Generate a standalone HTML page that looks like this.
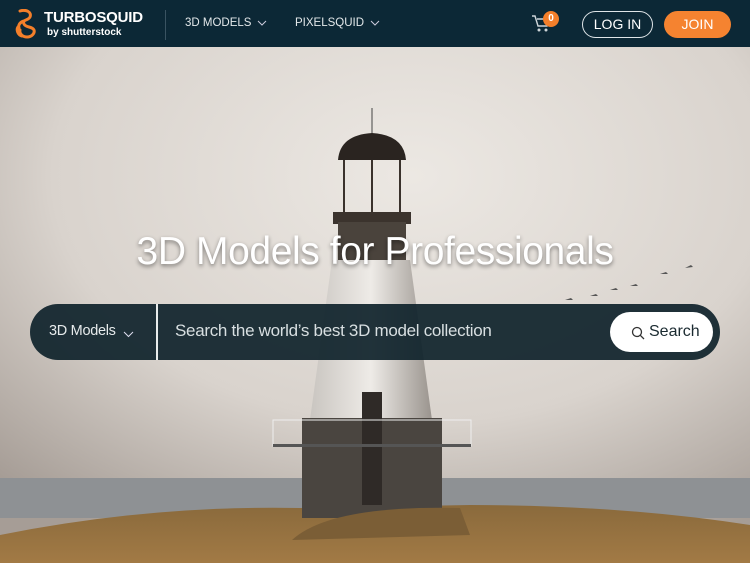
<!DOCTYPE html>
<html><head><meta charset="utf-8"><style>
*{margin:0;padding:0;box-sizing:border-box}
html,body{width:750px;height:563px;overflow:hidden}
body{font-family:"Liberation Sans",sans-serif;position:relative;background:#d9d3cc}
.hdr{position:absolute;left:0;top:0;width:750px;height:47px;background:#0c2836;color:#fff}
.hero{position:absolute;left:0;top:47px;width:750px;height:516px;overflow:hidden}
h1{position:absolute;top:230px;left:0;width:750px;text-align:center;color:#fff;font-weight:400;font-size:39px;text-shadow:0 2px 4px rgba(0,0,0,.45);letter-spacing:-0.4px}
.sb{position:absolute;left:30px;top:304px;width:690px;height:56px;border-radius:28px;background:rgba(16,36,44,.93);color:#e6eaeb}
</style></head><body>
<div class="hero"><svg width="750" height="516" viewBox="0 47 750 516">
<defs>
<radialGradient id="sky" cx="0.55" cy="0.25" r="0.8"><stop offset="0" stop-color="#ece8e3"/><stop offset="0.6" stop-color="#d9d3cd"/><stop offset="1" stop-color="#a69d96"/></radialGradient>
<linearGradient id="lh" x1="0" x2="1"><stop offset="0" stop-color="#c9c5c0"/><stop offset="0.5" stop-color="#eeebe7"/><stop offset="1" stop-color="#9a948e"/></linearGradient>
<linearGradient id="grass" x1="0" y1="0" x2="0" y2="1"><stop offset="0" stop-color="#8a6a3c"/><stop offset="1" stop-color="#a27a45"/></linearGradient>
</defs>
<rect x="0" y="47" width="750" height="516" fill="url(#sky)"/>
<rect x="0" y="478" width="750" height="40" fill="#8e9194"/>
<path d="M0 535 Q150 505 300 508 L470 505 Q620 505 750 525 L750 563 L0 563Z" fill="url(#grass)"/>
<line x1="372" y1="108" x2="372" y2="140" stroke="#444" stroke-width="1"/>
<path d="M338 160 Q340 135 372 133 Q404 135 406 160Z" fill="#2a2420"/>
<g stroke="#3a322c" stroke-width="2"><line x1="344" y1="160" x2="344" y2="212"/><line x1="372" y1="160" x2="372" y2="212"/><line x1="400" y1="160" x2="400" y2="212"/></g>
<rect x="333" y="212" width="78" height="12" fill="#3b332d"/>
<rect x="338" y="222" width="68" height="38" fill="#4a433c"/>
<path d="M332 260 L410 260 L432 420 L310 420Z" fill="url(#lh)"/>
<rect x="302" y="418" width="140" height="100" fill="#4a4540"/>
<rect x="362" y="392" width="20" height="113" fill="#2f2a27"/>
<g stroke="#eee" stroke-width="1" fill="none"><rect x="273" y="420" width="198" height="26"/></g>
<rect x="273" y="444" width="198" height="3" fill="#555"/>
<path d="M292 540 Q330 505 460 508 L470 535Z" fill="#7b5e36"/>
<g fill="#555"><path d="M565 300l6-2 2 2zM590 296l6-2 2 2zM610 290l6-2 2 2zM630 286l6-2 2 2zM660 274l6-2 2 2zM685 268l6-3 2 2z"/></g>
</svg></div>
<div class="hdr">
<svg style="position:absolute;left:14px;top:9px" width="26" height="30" viewBox="0 0 26 30"><path d="M6 2c6-2 12 1 10 6-2 4-8 2-6 7 2 4 8 2 10 6 1 3-2 7-7 7-4 0-8-3-7-7M4 18c-2 3 0 8 4 9M10 12c-4 1-6 4-5 7" stroke="#f47f2a" stroke-width="3" fill="none" stroke-linecap="round"/></svg>
<div style="position:absolute;left:44px;top:9px;font-size:15px;font-weight:700;letter-spacing:-0.2px">TURBOSQUID</div>
<div style="position:absolute;left:47px;top:27px;font-size:10px;font-weight:700">by shutterstock</div>
<div style="position:absolute;left:165px;top:10px;width:1px;height:30px;background:#3a5361"></div>
<div style="position:absolute;left:185px;top:17px;font-size:11.5px;color:#e3e8ea">3D MODELS</div>
<svg style="position:absolute;left:257px;top:20px" width="10" height="6"><path d="M1 1l4 4 4-4" stroke="#ccd" fill="none"/></svg>
<div style="position:absolute;left:295px;top:17px;font-size:11.5px;color:#e3e8ea">PIXELSQUID</div>
<svg style="position:absolute;left:370px;top:20px" width="10" height="6"><path d="M1 1l4 4 4-4" stroke="#ccd" fill="none"/></svg>
<svg style="position:absolute;left:531px;top:14px" width="20" height="20" viewBox="0 0 20 20"><path d="M1 2h3l3 10h9l2-7H6" stroke="#cfd6da" stroke-width="1.4" fill="none"/><circle cx="8" cy="16" r="1.5" fill="#cfd6da"/><circle cx="15" cy="16" r="1.5" fill="#cfd6da"/></svg>
<div style="position:absolute;left:543px;top:11px;width:16px;height:16px;border-radius:8px;background:#f47f2a;font-size:10px;text-align:center;line-height:16px;font-weight:700">0</div>
<div style="position:absolute;left:582px;top:11px;width:71px;height:27px;border:1.5px solid #dfe5e8;border-radius:14px;text-align:center;line-height:24px;font-size:14px">LOG IN</div>
<div style="position:absolute;left:664px;top:11px;width:67px;height:27px;background:#f58330;border-radius:14px;text-align:center;line-height:27px;font-size:14px">JOIN</div>
</div>
<h1>3D Models for Professionals</h1>
<div class="sb">
<div style="position:absolute;left:19px;top:19px;font-size:14.5px;letter-spacing:-0.3px">3D Models</div>
<svg style="position:absolute;left:93px;top:27px" width="11" height="7"><path d="M1 1l4.5 4.5L10 1" stroke="#dde" fill="none"/></svg>
<div style="position:absolute;left:126px;top:0;width:2px;height:56px;background:#e8ecec"></div>
<div style="position:absolute;left:145px;top:17px;font-size:17px;letter-spacing:-0.3px;color:#d8dfe1">Search the world’s best 3D model collection</div>
<div style="position:absolute;left:580px;top:8px;width:103px;height:40px;background:#fff;border-radius:20px;color:#1a2a30;font-size:16px">
<svg style="position:absolute;left:21px;top:14px" width="14" height="14"><circle cx="6" cy="6" r="4.5" stroke="#333" stroke-width="1.3" fill="none"/><path d="M9.3 9.3L13 13" stroke="#333" stroke-width="1.3"/></svg>
<span style="position:absolute;left:39px;top:11px">Search</span></div>
</div>
</body></html>
